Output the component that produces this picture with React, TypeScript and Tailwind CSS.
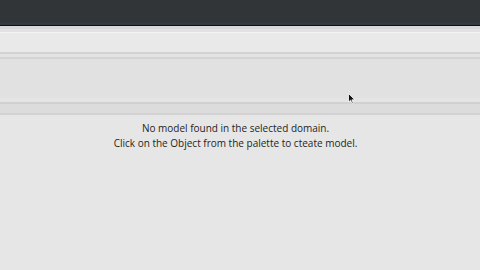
import React from "react";

export default function App() {
  return (
    <div className="relative w-[480px] h-[270px] overflow-hidden bg-[#e5e5e5] flex flex-col" style={{ fontFamily: '"Open Sans", "Noto Sans", sans-serif' }}>
      <div className="h-[21px] bg-[#323538]" />
      <div className="h-[2px] bg-[#2d3740]" />
      <div className="h-[2px] bg-[#363a3e]" />
      <div className="h-[1px] bg-[#111]" />
      <div className="h-[3px] bg-[#d8d8db]" />
      <div className="h-[3px] bg-[#e2e2e4]" />
      <div className="h-[1px] bg-[#f4f4f4]" />
      <div className="h-[19px] bg-[#e9e9e9]" />
      <div className="h-[2px] bg-[#d2d2d2]" />
      <div className="h-[3px] bg-[#e3e3e3]" />
      <div className="h-[2px] bg-[#d3d3d3]" />
      <div className="h-[39px] bg-[#e1e1e1]" />
      <div className="h-[4px] bg-[#e4e4e4]" />
      <div className="h-[2px] bg-[#d0d0d0]" />
      <div className="h-[9px] bg-[#dcdcdc]" />
      <div className="h-[2px] bg-[#d2d2d2]" />
      <div className="flex-1 bg-[#e6e6e6] flex flex-col items-center pt-[6px] pr-[9px] text-[10px] leading-[15px] text-[#1e1e1e]">
        <div>No model found in the selected domain.</div>
        <div>Click on the Object from the palette to cteate model.</div>
      </div>
      <svg className="absolute left-[348px] top-[93px]" width="8" height="12" viewBox="0 0 8 12">
        <path d="M0.5 0.5 L0.5 9 L2.6 7.2 L4 10.5 L5.2 10 L3.9 6.8 L6.8 6.8 Z" fill="#111" stroke="#fff" strokeWidth="0.8" />
      </svg>
    </div>
  );
}
